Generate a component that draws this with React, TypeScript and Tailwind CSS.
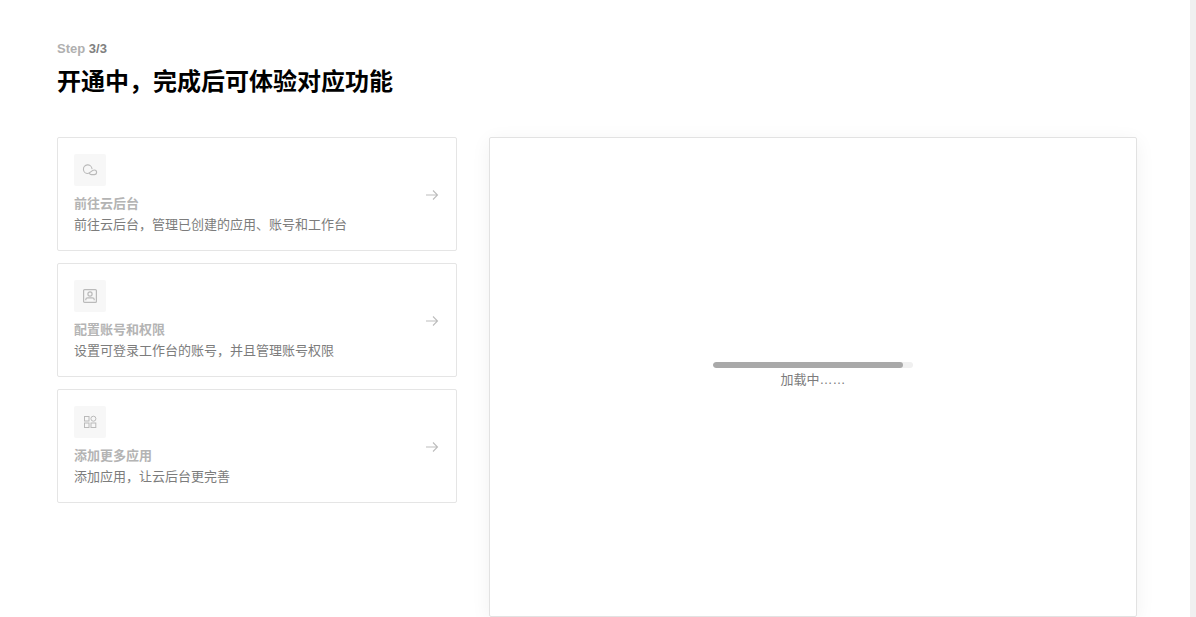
import type { ReactNode } from "react";

const iconProps = {
  width: 16,
  height: 16,
  viewBox: "0 0 16 16",
  fill: "none",
  stroke: "currentColor",
  strokeWidth: 1,
  "aria-hidden": true,
} as const;

function CloudIcon() {
  return (
    <svg {...iconProps} strokeWidth={1.1} strokeLinecap="round" strokeLinejoin="round">
      <path d="M10 6.6A4.3 4.3 0 1 0 5.8 11.5C8.2 11.5 9.4 8 12.3 8a2.3 2.3 0 0 1 0 4.6H9.4c-1 0-1.7-.5-2.1-1.3" />
    </svg>
  );
}

function AccountIcon() {
  return (
    <svg {...iconProps} strokeWidth={1.2}>
      <rect x="1.6" y="1.6" width="12.8" height="12.8" rx="1" />
      <circle cx="8" cy="6" r="2.1" />
      <path d="M3.8 12.2V11.6c0-1 .8-1.7 1.8-1.7h4.8c1 0 1.8.7 1.8 1.7v.6" />
    </svg>
  );
}

function AppsIcon() {
  return (
    <svg {...iconProps}>
      <rect x="2.5" y="2.5" width="4.5" height="4.5" />
      <circle cx="11.4" cy="4.7" r="2.5" />
      <rect x="2.5" y="9" width="4.5" height="4.5" />
      <rect x="9" y="9" width="4.8" height="4.5" />
    </svg>
  );
}

function ArrowIcon() {
  return (
    <svg {...iconProps} strokeWidth={1.1}>
      <path d="M2 8h11.5M9 3.5 13.5 8 9 12.5" />
    </svg>
  );
}

type Entry = { title: string; description: string; icon: ReactNode };

const entries: Entry[] = [
  {
    title: "前往云后台",
    description: "前往云后台，管理已创建的应用、账号和工作台",
    icon: <CloudIcon />,
  },
  {
    title: "配置账号和权限",
    description: "设置可登录工作台的账号，并且管理账号权限",
    icon: <AccountIcon />,
  },
  {
    title: "添加更多应用",
    description: "添加应用，让云后台更完善",
    icon: <AppsIcon />,
  },
];

function EntryCard({ title, description, icon }: Entry) {
  return (
    <button
      type="button"
      className="flex w-full items-center justify-between rounded-xs border border-[#e5e5e5] bg-white px-4 pt-4 pb-[15px] text-left"
    >
      <span className="flex flex-col">
        <span className="flex size-8 items-center justify-center rounded-xs bg-[#f7f7f7] text-[#bababa]">
          {icon}
        </span>
        <span className="mt-[7px] text-[13px] leading-[21px] font-bold text-[#b4b4b4]">{title}</span>
        <span className="text-[13px] leading-[21px] text-[#7c7c7c]">{description}</span>
      </span>
      <span className="shrink-0 text-[#bdbdbd]">
        <ArrowIcon />
      </span>
    </button>
  );
}

export default function App() {
  return (
    <div className="flex min-h-screen bg-[#f0f0f0] pr-1.5 font-['Liberation_Sans','Noto_Sans_CJK_SC',sans-serif]">
      <main className="flex-1 overflow-hidden bg-white pt-[39px] pr-[53px] pl-[57px]">
        <header>
          <p className="text-[13px] leading-5 font-bold text-[#b0b0b0]">
            Step <span className="text-[#808080]">3/3</span>
          </p>
          <h1 className="mt-[5px] text-2xl leading-9 font-bold text-black">
            开通中，完成后可体验对应功能
          </h1>
        </header>
        <div className="mt-[37px] flex items-start gap-8">
          <nav className="flex w-[400px] shrink-0 flex-col gap-3">
            {entries.map((entry) => (
              <EntryCard key={entry.title} {...entry} />
            ))}
          </nav>
          <section className="flex min-h-[480px] flex-1 flex-col items-center justify-center rounded-xs border border-[#e2e2e2] bg-white pb-0.5 shadow-[0_4px_20px_rgba(0,0,0,0.06)]">
            <div
              role="progressbar"
              aria-label="加载中"
              aria-valuenow={95}
              aria-valuemin={0}
              aria-valuemax={100}
              className="h-1.5 w-[200px] overflow-hidden rounded-full bg-[#f0f0f0]"
            >
              <div className="h-full rounded-full bg-[#a9a9a9]" style={{ width: "95%" }} />
            </div>
            <p className="mt-px text-[13px] leading-[21px] text-[#7c7c7c]">加载中……</p>
          </section>
        </div>
      </main>
    </div>
  );
}
